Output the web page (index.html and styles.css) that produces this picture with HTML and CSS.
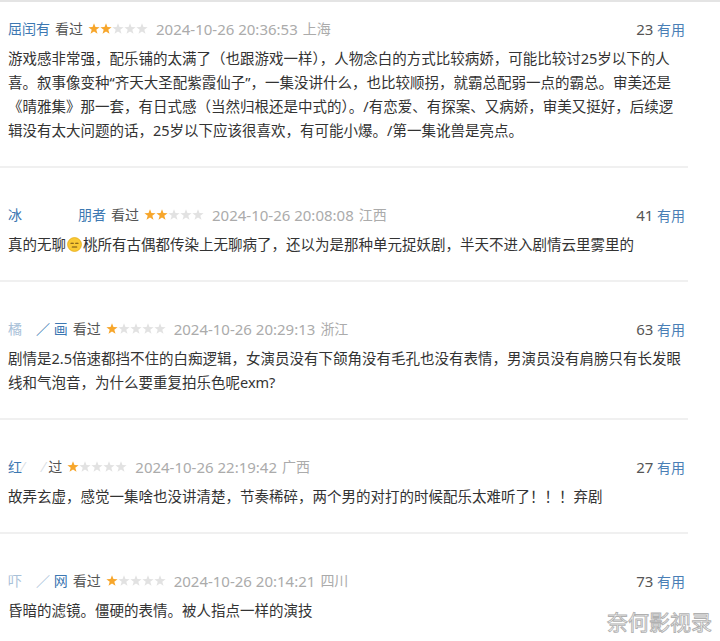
FILE: index.html
```html
<!DOCTYPE html>
<html lang="zh-CN">
<head>
  <meta charset="UTF-8">
  <title>短评</title>
  <meta name="viewport" content="width=device-width, initial-scale=1">
  <link rel="stylesheet" href="styles.css">
</head>
<body>
  <svg class="defs" width="0" height="0" aria-hidden="true">
    <symbol id="star" viewBox="0 0 12 12">
      <polygon points="6,0.3 7.45,4.1 11.6,4.2 8.3,6.75 9.5,10.8 6,8.45 2.5,10.8 3.7,6.75 0.4,4.2 4.55,4.1"/>
    </symbol>
  </svg>

  <div class="page">
    <div class="comments">

      <div class="comment">
        <div class="meta">
          <span class="name">屈闰有</span>
          <span class="status">看过</span>
          <span class="rating">
            <svg class="star on"><use href="#star"/></svg><svg class="star on"><use href="#star"/></svg><svg class="star"><use href="#star"/></svg><svg class="star"><use href="#star"/></svg><svg class="star"><use href="#star"/></svg>
          </span>
          <span class="time">2024-10-26 20:36:53</span>
          <span class="place">上海</span>
          <span class="votes"><span class="count">23</span> <span class="useful">有用</span></span>
        </div>
        <p class="text">游戏感非常强，配乐铺的太满了（也跟游戏一样），人物念白的方式比较病娇，可能比较讨25岁以下的人喜。叙事像变种“齐天大圣配紫霞仙子”，一集没讲什么，也比较顺拐，就霸总配弱一点的霸总。审美还是《晴雅集》那一套，有日式感（当然归根还是中式的）。/有恋爱、有探案、又病娇，审美又挺好，后续逻辑没有太大问题的话，25岁以下应该很喜欢，有可能小爆。/第一集讹兽是亮点。</p>
      </div>

      <div class="comment">
        <div class="meta">
          <span class="name">冰<span class="mask">　　　　</span>朋者</span>
          <span class="status">看过</span>
          <span class="rating">
            <svg class="star on"><use href="#star"/></svg><svg class="star on"><use href="#star"/></svg><svg class="star"><use href="#star"/></svg><svg class="star"><use href="#star"/></svg><svg class="star"><use href="#star"/></svg>
          </span>
          <span class="time">2024-10-26 20:08:08</span>
          <span class="place">江西</span>
          <span class="votes"><span class="count">41</span> <span class="useful">有用</span></span>
        </div>
        <p class="text">真的无聊<svg class="emoji" viewBox="0 0 16 16"><circle cx="8" cy="8" r="7.4" fill="#f9c935" stroke="#e5aa12" stroke-width="0.8"/><path d="M4.2 6.6h2.6M9.2 6.6h2.6M5.6 10.6h4.8" stroke="#6b4a12" stroke-width="1.1" stroke-linecap="round"/></svg>桃所有古偶都传染上无聊病了，还以为是那种单元捉妖剧，半天不进入剧情云里雾里的</p>
      </div>

      <div class="comment">
        <div class="meta">
          <span class="name"><span class="faded">橘</span><span class="mask">　</span>／<span class="mask"> </span>画</span>
          <span class="status">看过</span>
          <span class="rating">
            <svg class="star on"><use href="#star"/></svg><svg class="star"><use href="#star"/></svg><svg class="star"><use href="#star"/></svg><svg class="star"><use href="#star"/></svg><svg class="star"><use href="#star"/></svg>
          </span>
          <span class="time">2024-10-26 20:29:13</span>
          <span class="place">浙江</span>
          <span class="votes"><span class="count">63</span> <span class="useful">有用</span></span>
        </div>
        <p class="text">剧情是2.5倍速都挡不住的白痴逻辑，女演员没有下颌角没有毛孔也没有表情，男演员没有肩膀只有长发眼线和气泡音，为什么要重复拍乐色呢exm?</p>
      </div>

      <div class="comment">
        <div class="meta">
          <span class="name">红<span class="mask">⁄　</span></span>
          <span class="status"><span class="mask">⁄ </span>过</span>
          <span class="rating">
            <svg class="star on"><use href="#star"/></svg><svg class="star"><use href="#star"/></svg><svg class="star"><use href="#star"/></svg><svg class="star"><use href="#star"/></svg><svg class="star"><use href="#star"/></svg>
          </span>
          <span class="time">2024-10-26 22:19:42</span>
          <span class="place">广西</span>
          <span class="votes"><span class="count">27</span> <span class="useful">有用</span></span>
        </div>
        <p class="text">故弄玄虚，感觉一集啥也没讲清楚，节奏稀碎，两个男的对打的时候配乐太难听了！！！弃剧</p>
      </div>

      <div class="comment">
        <div class="meta">
          <span class="name"><span class="faded">吓</span><span class="mask">　</span><span class="faded">／</span><span class="mask"> </span>网</span>
          <span class="status">看过</span>
          <span class="rating">
            <svg class="star on"><use href="#star"/></svg><svg class="star"><use href="#star"/></svg><svg class="star"><use href="#star"/></svg><svg class="star"><use href="#star"/></svg><svg class="star"><use href="#star"/></svg>
          </span>
          <span class="time">2024-10-26 20:14:21</span>
          <span class="place">四川</span>
          <span class="votes"><span class="count">73</span> <span class="useful">有用</span></span>
        </div>
        <p class="text">昏暗的滤镜。僵硬的表情。被人指点一样的演技</p>
      </div>

    </div>

    <div class="watermark">奈何影视录</div>
  </div>
</body>
</html>
```

FILE: styles.css
```css
body {
  margin: 0;
  background: #fff;
  color: #333;
  font-family: "Noto Sans", "Noto Sans CJK SC", sans-serif;
}
.defs {
  position: absolute;
  width: 0;
  height: 0;
}
.page {
  position: relative;
  height: 639px;
  overflow: hidden;
  border-top: 2px solid #e4e4e4;
}
.comments {
  margin-right: 32px;
}
.comment {
  padding: 35px 3px 24px 8px;
  border-bottom: 2px solid #f0f0f0;
}
.comment:first-child {
  padding-top: 15px;
}
.comment:last-child {
  border-bottom: none;
}

/* header row */
.meta {
  display: flex;
  align-items: center;
  gap: 5px;
  height: 24px;
  font-size: 14px;
  line-height: 24px;
  white-space: nowrap;
}
.name {
  color: #3d78b2;
}
.name .faded {
  color: #a9c1d8;
}
.mask {
  color: #d9dee4;
}
.status {
  color: #555;
}
.rating {
  display: flex;
  align-items: center;
}
.star {
  width: 12px;
  height: 12px;
  fill: #e2e2e2;
}
.star.on {
  fill: #f7a62b;
}
.time {
  margin-left: 3px;
  font-size: 15px;
  color: #ababab;
}
.place {
  color: #ababab;
}
.votes {
  margin-left: auto;
}
.count {
  font-size: 15px;
  color: #555;
}
.useful {
  color: #4a7fb6;
}

/* comment body */
.text {
  margin: 5px 0 0;
  font-size: 14.5px;
  line-height: 24px;
  color: #333;
}
.emoji {
  width: 15px;
  height: 15px;
  margin: 0 1px;
  vertical-align: -2px;
}

.watermark {
  position: absolute;
  right: 8px;
  bottom: 9px;
  font-family: "Noto Sans CJK SC", sans-serif;
  font-size: 21px;
  line-height: 1;
  color: #fff;
  -webkit-text-stroke: 0.9px #b0b0b0;
}
```
